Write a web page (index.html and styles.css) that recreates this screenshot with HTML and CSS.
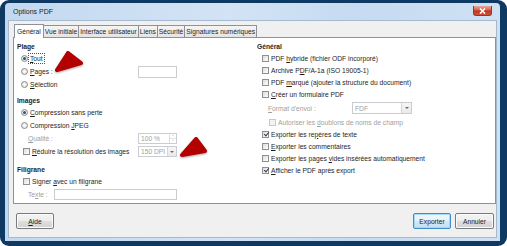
FILE: index.html
```html
<!DOCTYPE html>
<html lang="fr">
<head>
    <meta charset="UTF-8">
    <title>Options PDF</title>
    <link rel="stylesheet" href="styles.css">
</head>
<body>
    <div class="screen">
        <div class="window">
            <div class="titlebar">
                <span class="title">Options PDF</span>
                <div class="close">
                    <svg width="9" height="6" viewBox="0 0 9 6"><path d="M2 0.5 L7 5.5 M7 0.5 L2 5.5" stroke="#fff" stroke-width="1.6"/></svg>
                </div>
            </div>

            <div class="client">
                <!-- Tabs -->
                <div class="tabs">
                    <div class="tab active">Général</div>
                    <div class="tab">Vue initiale</div>
                    <div class="tab">Interface utilisateur</div>
                    <div class="tab">Liens</div>
                    <div class="tab">Sécurité</div>
                    <div class="tab">Signatures numériques</div>
                </div>

                <div class="panel">
                    <!-- Left column -->
                    <div class="col col-left">
                        <div class="heading">Plage</div>
                        <div class="row pad-opt"><span class="radio on"></span><span class="focus"><u>T</u>out</span></div>
                        <div class="row pad-opt"><span class="radio"></span><span><u>P</u>ages :</span><span class="field"></span></div>
                        <div class="row pad-opt"><span class="radio"></span><span><u>S</u>élection</span></div>

                        <div class="heading section">Images</div>
                        <div class="row pad-opt"><span class="radio on"></span><span><u>C</u>ompression sans perte</span></div>
                        <div class="row pad-opt"><span class="radio"></span><span>Compression <u>J</u>PEG</span></div>
                        <div class="row pad-sub"><span class="muted"><u>Q</u>ualité :</span>
                            <span class="field spinbox">100 %<span class="spin"><i class="up"></i><i class="down"></i></span></span>
                        </div>
                        <div class="row pad-check"><span class="check"></span><span><u>R</u>éduire la résolution des images</span>
                            <span class="field combo">150 DPI<span class="drop"><i></i></span></span>
                        </div>

                        <div class="heading section-wide">Filigrane</div>
                        <div class="row pad-check"><span class="check"></span><span>Signer <u>a</u>vec un filigrane</span></div>
                        <div class="row pad-sub"><span class="muted">Te<u>x</u>te :</span><span class="field wide"></span></div>
                    </div>

                    <!-- Right column -->
                    <div class="col col-right">
                        <div class="heading">Général</div>
                        <div class="row pad-check-r"><span class="check"></span><span>PDF <u>h</u>ybride (fichier ODF incorporé)</span></div>
                        <div class="row pad-check-r"><span class="check"></span><span>Archive P<u>D</u>F/A-1a (ISO 19005-1)</span></div>
                        <div class="row pad-check-r"><span class="check"></span><span>PDF <u>m</u>arqué (ajouter la structure du document)</span></div>
                        <div class="row pad-check-r"><span class="check"></span><span><u>C</u>réer un formulaire PDF</span></div>
                        <div class="row row-format"><span class="muted label-format"><u>F</u>ormat d'envoi :</span>
                            <span class="field combo combo-fdf">FDF<span class="drop"><i></i></span></span>
                        </div>
                        <div class="row pad-check-sub"><span class="check disabled"></span><span class="muted">Autoriser les <u>d</u>oublons de noms de champ</span></div>
                        <div class="row pad-check-r"><span class="check on"></span><span>Exporter les re<u>p</u>ères de texte</span></div>
                        <div class="row pad-check-r"><span class="check"></span><span><u>E</u>xporter les commentaires</span></div>
                        <div class="row pad-check-r"><span class="check"></span><span>Exporter les pages <u>v</u>ides insérées automatiquement</span></div>
                        <div class="row pad-check-r"><span class="check on"></span><span><u>A</u>fficher le PDF après export</span></div>
                    </div>
                </div>

                <div class="footer">
                    <button class="btn"><u>A</u>ide</button>
                    <span class="spacer"></span>
                    <button class="btn default">Exporter</button>
                    <button class="btn wide-btn">Annuler</button>
                </div>
            </div>
        </div>

        <!-- red annotation arrows -->
        <svg class="arrow arrow-a" width="32" height="26" viewBox="0 0 32 26">
            <polygon points="14,4 3,21 27,14" fill="#b30000" stroke="#b30000" stroke-width="4" stroke-linejoin="round"/>
        </svg>
        <svg class="arrow arrow-b" width="32" height="26" viewBox="0 0 32 26">
            <polygon points="18,3 4,19 27,15" fill="#b30000" stroke="#b30000" stroke-width="4" stroke-linejoin="round"/>
        </svg>
    </div>
</body>
</html>
```

FILE: styles.css
```css
* {
    box-sizing: border-box;
}

body {
    margin: 0;
    background-color: #ffffff;
    font-family: 'Liberation Sans', Arial, sans-serif;
    font-size: 6.7px;
    color: #1e1e1e;
}

u {
    text-decoration-thickness: 0.5px;
    text-underline-offset: 1px;
}

.screen {
    position: relative;
    width: 507px;
    height: 246px;
    padding: 3px 7px 5px 5px;
    background-color: #0d3963;
    border-radius: 9px;
}

.window {
    height: 238px;
    display: flex;
    flex-direction: column;
    padding: 0 3px 3px 3px;
    border-radius: 4px 4px 0 0;
    background: linear-gradient(to right, #c3d8ef, #d3e3f5 45%, #c6dbf1 70%, #cfe0f3);
}

.titlebar {
    height: 17px;
    display: flex;
    align-items: center;
    padding-left: 5px;
}

.title {
    font-size: 7px;
    color: #1e1e1e;
}

.close {
    margin-left: auto;
    margin-right: 5px;
    align-self: flex-start;
    margin-top: 3px;
    width: 19px;
    height: 10px;
    display: flex;
    align-items: center;
    justify-content: center;
    border: 1px solid #8b3a2f;
    border-top: none;
    border-radius: 0 0 3px 3px;
    background: linear-gradient(#e9a99c, #d5614c 45%, #c3321d 55%, #d0523c);
}

.client {
    flex: 1;
    display: flex;
    flex-direction: column;
    padding: 3px 0 0 4px;
    background-color: #f0f0f0;
    border: 1px solid #a5b9d0;
}

/* Tabs */
.tabs {
    height: 13px;
    display: flex;
    align-items: flex-end;
    margin-left: 1px;
    position: relative;
    z-index: 1;
}

.tab {
    height: 12px;
    display: flex;
    align-items: center;
    padding: 0 1px;
    margin-left: -1px;
    border: 1px solid #8e9199;
    border-bottom: none;
    background: linear-gradient(#f5f5f5, #e4e4e4);
    white-space: nowrap;
}

.tab:first-child {
    margin-left: 0;
}

.tab.active {
    height: 14px;
    margin-bottom: -1px;
    padding: 0 2px 1px;
    background: #ffffff;
    position: relative;
    z-index: 2;
}

.panel {
    height: 167px;
    display: grid;
    grid-template-columns: 240px 1fr;
    padding: 3px 0 0 3px;
    background-color: #ffffff;
    border: 1px solid #8e9199;
}

.col-left {
    width: 160px;
}

.heading {
    height: 11px;
    display: flex;
    align-items: center;
    font-weight: bold;
}

.heading.section {
    margin-top: 4px;
}

.heading.section-wide {
    margin-top: 6px;
}

.row {
    height: 13px;
    display: flex;
    align-items: center;
    white-space: nowrap;
}

.col-right .row {
    height: 12px;
}

.pad-opt { padding-left: 4px; }
.pad-sub { padding-left: 11px; }
.pad-check { padding-left: 6px; }
.pad-check-r { padding-left: 5px; }
.pad-check-sub { padding-left: 12px; }

.muted {
    color: #a0a0a0;
}

.focus {
    outline: 1px dotted #555555;
    outline-offset: 1px;
}

.radio {
    flex: none;
    width: 7px;
    height: 7px;
    margin-right: 2px;
    display: flex;
    align-items: center;
    justify-content: center;
    border: 1px solid #8c8c8c;
    border-radius: 50%;
    background: radial-gradient(#ffffff, #d8d8d8);
}

.radio.on::after {
    content: "";
    width: 3px;
    height: 3px;
    border-radius: 50%;
    background-color: #24548c;
}

.check {
    flex: none;
    position: relative;
    width: 7px;
    height: 7px;
    margin-right: 2px;
    border: 1px solid #8f8f8f;
    background: linear-gradient(135deg, #dcdcdc, #ffffff);
}

.check.disabled {
    border-color: #c8c8c8;
    background: #f4f4f4;
}

.check.on::after {
    content: "";
    position: absolute;
    left: 1.5px;
    top: -0.5px;
    width: 2px;
    height: 4px;
    border: solid #2c3e58;
    border-width: 0 1px 1px 0;
    transform: rotate(40deg);
}

/* fields */
.field {
    margin-left: auto;
    width: 39px;
    height: 12px;
    display: flex;
    align-items: center;
    padding-left: 2px;
    color: #a0a0a0;
    background-color: #ffffff;
    border: 1px solid #c9ccd1;
}

.field.wide {
    width: 123px;
    height: 11px;
}

.spinbox,
.combo {
    height: 11px;
}

.spin {
    margin-left: auto;
    width: 7px;
    height: 100%;
    display: flex;
    flex-direction: column;
    border-left: 1px solid #dedede;
}

.spin i {
    flex: 1;
    position: relative;
}

.spin i.up {
    border-bottom: 1px solid #e4e4e4;
}

.spin i::after {
    content: "";
    position: absolute;
    left: 1.5px;
    top: 1px;
    border-left: 1.5px solid transparent;
    border-right: 1.5px solid transparent;
}

.spin i.up::after {
    border-bottom: 1.5px solid #c0c0c0;
}

.spin i.down::after {
    border-top: 1.5px solid #c0c0c0;
}

.drop {
    margin-left: auto;
    width: 9px;
    height: 100%;
    display: flex;
    align-items: center;
    justify-content: center;
    border-left: 1px solid #d6d6d6;
    background: linear-gradient(#f6f6f6, #e9e9e9);
}

.drop i {
    border-left: 2px solid transparent;
    border-right: 2px solid transparent;
    border-top: 2px solid #6b6b6b;
}

.row-format {
    height: 16px !important;
    padding-left: 11px;
}

.label-format {
    width: 84px;
}

.combo-fdf {
    margin-left: 0;
    width: 60px;
    height: 12px;
}

.combo-fdf .drop {
    width: 10px;
}

/* buttons */
.footer {
    display: flex;
    gap: 4px;
    margin-top: 9px;
    padding: 0 2px 0 3px;
}

.spacer {
    flex: 1;
}

.btn {
    width: 38px;
    height: 16px;
    padding: 0;
    font: inherit;
    color: #1e1e1e;
    border: 1px solid #7a7a7a;
    border-radius: 2px;
    background: linear-gradient(#f4f4f4, #ececec 50%, #dedede 50%, #d2d2d2);
    box-shadow: inset 0 0 0 1px #fbfbfb;
}

.btn.wide-btn {
    width: 39px;
}

.btn.default {
    border-color: #3c8fcb;
    box-shadow: inset 0 0 0 1px #a7d8f3;
    background: linear-gradient(#f0f7fc, #e4f1fa 50%, #d2e8f6 50%, #c6e1f3);
}

/* annotation arrows */
.arrow {
    position: absolute;
    filter: drop-shadow(0 1px 1px rgba(0, 0, 0, 0.35));
}

.arrow-a {
    left: 54px;
    top: 49px;
}

.arrow-b {
    left: 178px;
    top: 136px;
}
```
